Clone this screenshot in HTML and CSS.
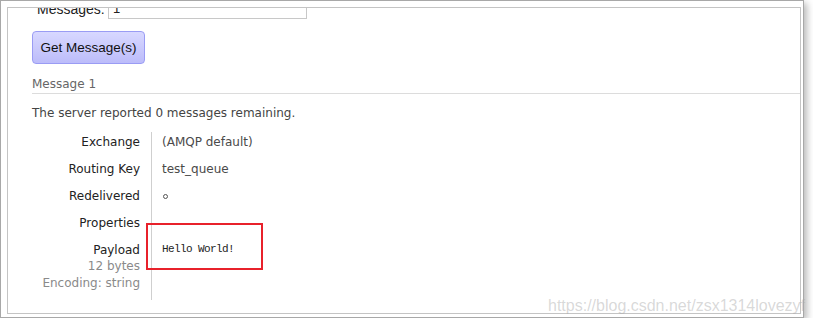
FILE: index.html
```html
<!DOCTYPE html>
<html>
<head>
<meta charset="utf-8">
<link rel="stylesheet" href="styles.css">
</head>
<body>
<div class="frame">
  <div class="panel">
    <div class="msg-row">
      <label class="msg-label">Messages:</label>
      <div class="msg-input">1</div>
    </div>
    <button class="get-btn">Get Message(s)</button>
    <h3 class="msg-title">Message 1</h3>
    <p class="server-note">The server reported <b class="num">0</b> messages remaining.</p>
    <div class="facts">
      <div class="fact-k">Exchange</div>
      <div class="fact-v">(AMQP default)</div>
      <div class="fact-k">Routing Key</div>
      <div class="fact-v">test_queue</div>
      <div class="fact-k">Redelivered</div>
      <div class="fact-v"><span class="dot"></span></div>
      <div class="fact-k">Properties</div>
      <div class="fact-v"></div>
      <div class="fact-k fact-last">Payload<div class="sub">12 bytes</div><div class="sub">Encoding: string</div></div>
      <div class="fact-v fact-last"><div class="payload">Hello World!</div></div>
    </div>
    <div class="highlight"></div>
  </div>
  <div class="watermark">https://blog.csdn.net/zsx1314lovezyf</div>
</div>
</body>
</html>
```
FILE: styles.css
```css
html, body {
  margin: 0;
  padding: 0;
  background: #fff;
}
.frame {
  position: relative;
  box-sizing: border-box;
  width: 804px;
  height: 318px;
  padding: 6px 2px 3px 6px;
  border: 1px solid #a8a8a8;
  background: #fff;
  box-shadow: 3px 3px 7px rgba(0,0,0,0.28);
}
.panel {
  position: relative;
  box-sizing: border-box;
  width: 794px;
  height: 307px;
  border: 1px solid #c4c4c4;
  overflow: hidden;
  padding-left: 24px;
  font-family: "DejaVu Sans", Verdana, sans-serif;
  font-size: 12px;
  color: #333;
}
.msg-row {
  display: flex;
  align-items: center;
  height: 20px;
  margin-top: -9px;
}
.msg-label {
  box-sizing: border-box;
  width: 76px;
  padding-left: 5px;
  font-family: "Liberation Sans", Arial, sans-serif;
  font-size: 14px;
  color: #222;
}
.msg-input {
  box-sizing: border-box;
  width: 199px;
  height: 20px;
  border: 1px solid #c8c8c8;
  padding-left: 4px;
  font-family: "Liberation Sans", Arial, sans-serif;
  font-size: 13px;
  line-height: 18px;
  color: #222;
}
.get-btn {
  display: block;
  box-sizing: border-box;
  width: 113px;
  height: 33px;
  margin: 12px 0 0 0;
  padding: 0;
  border: 1px solid #9a9cf4;
  border-radius: 4px;
  background: linear-gradient(#d8d8ff, #bcbcfa);
  font-family: "Liberation Sans", Arial, sans-serif;
  font-size: 13.5px;
  color: #111;
}
.msg-title {
  margin: 12px 0 0 0;
  padding-bottom: 1px;
  border-bottom: 1px solid #dcdcdc;
  font-size: 12px;
  font-weight: normal;
  line-height: 16px;
  color: #666;
}
.server-note {
  margin: 11px 0 0 0;
  line-height: 16px;
  color: #444;
}
.num {
  font-weight: normal;
}
.facts {
  display: grid;
  grid-template-columns: 119px 1fr;
  margin-top: 11px;
  line-height: 16px;
}
.fact-k {
  box-sizing: border-box;
  height: 27px;
  padding: 2px 11px 0 0;
  text-align: right;
  color: #222;
}
.fact-v {
  box-sizing: border-box;
  height: 27px;
  padding: 2px 0 0 10px;
  border-left: 1px solid #cfcfcf;
  color: #4a4a4a;
}
.fact-last {
  height: 60px;
}
.sub {
  line-height: 17px;
  color: #8a8a8a;
}
.dot {
  display: inline-block;
  width: 5px;
  height: 5px;
  box-sizing: border-box;
  border: 1px solid #555;
  border-radius: 50%;
  vertical-align: 1px;
  margin-left: 1px;
}
.payload {
  margin-top: -1px;
  font-family: "Liberation Mono", "Courier New", monospace;
  font-size: 11px;
  letter-spacing: -0.6px;
  color: #222;
}
.highlight {
  position: absolute;
  left: 138px;
  top: 215px;
  width: 117px;
  height: 47px;
  box-sizing: border-box;
  border: 2px solid #e8212b;
}
.watermark {
  position: absolute;
  left: 547px;
  top: 296px;
  font-family: "Liberation Sans", Arial, sans-serif;
  font-size: 16px;
  line-height: 18px;
  color: rgba(170,170,170,0.45);
  white-space: nowrap;
}
```
